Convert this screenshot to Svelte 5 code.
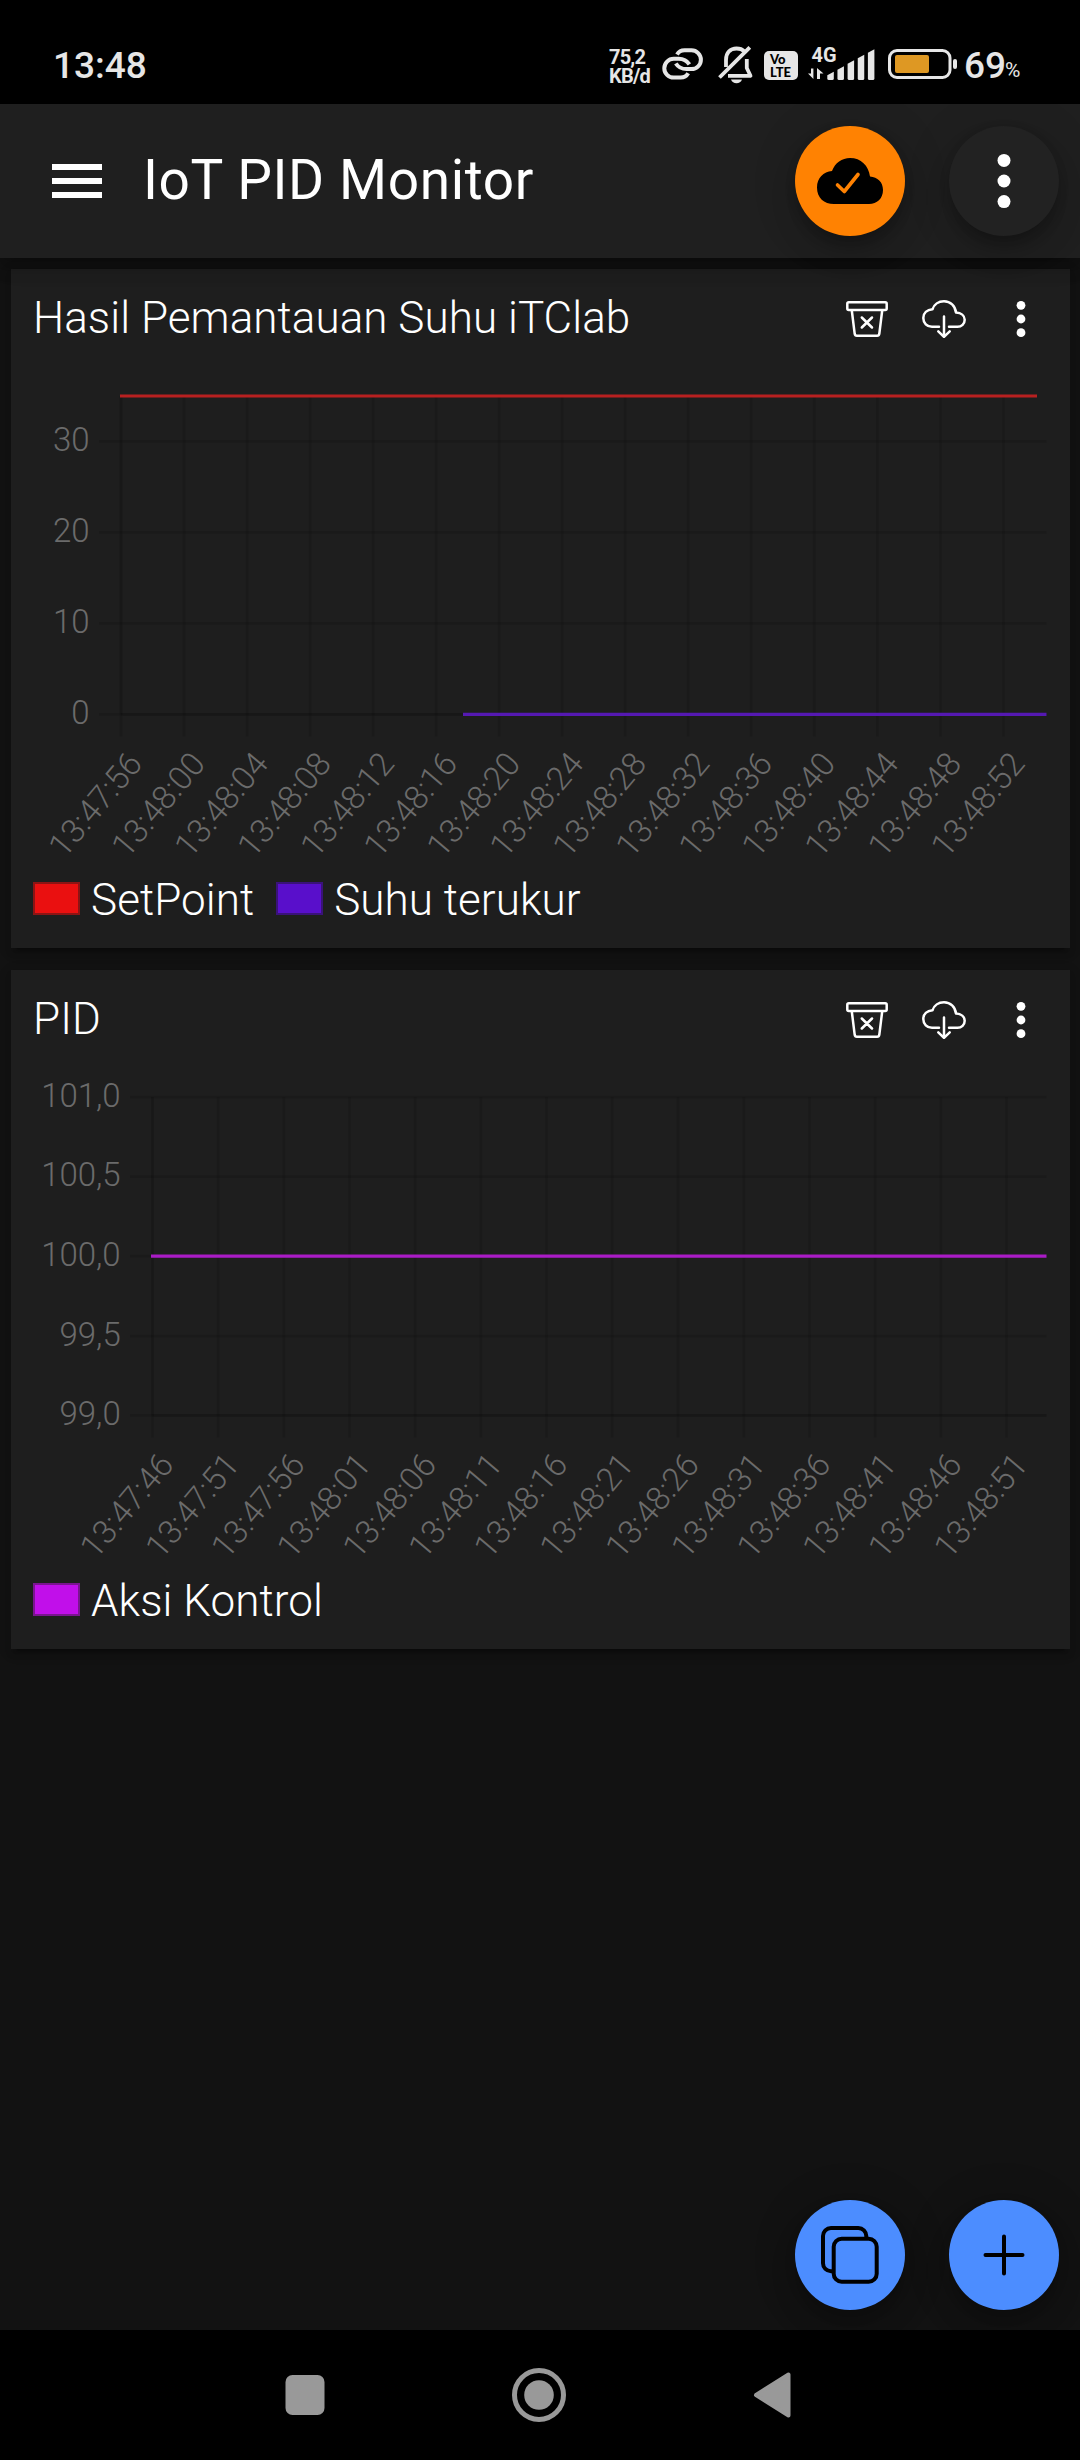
<script>
  const range = (n) => Array.from({ length: n }, (_, i) => i);

  const cards = [
    {
      title: 'Hasil Pemantauan Suhu iTClab',
      x0: 110, step: 63.03, left: 88, labelX: 78.5,
      y: [[172.3, '30'], [263.3, '20'], [354.3, '10'], [445.4, '0']],
      times: ['13:47:56', '13:48:00', '13:48:04', '13:48:08', '13:48:12', '13:48:16', '13:48:20', '13:48:24', '13:48:28', '13:48:32', '13:48:36', '13:48:40', '13:48:44', '13:48:48', '13:48:52'],
      series: [
        { name: 'SetPoint', cls: 'red', x1: 109, x2: 1026, y: 127 },
        { name: 'Suhu terukur', cls: 'violet', x1: 452, x2: 1035.5, y: 445.4 }
      ]
    },
    {
      title: 'PID',
      x0: 141.4, step: 65.7, left: 119, labelX: 109.7,
      y: [[127, '101,0'], [206.5, '100,5'], [286.2, '100,0'], [366, '99,5'], [445.4, '99,0']],
      times: ['13:47:46', '13:47:51', '13:47:56', '13:48:01', '13:48:06', '13:48:11', '13:48:16', '13:48:21', '13:48:26', '13:48:31', '13:48:36', '13:48:41', '13:48:46', '13:48:51'],
      series: [{ name: 'Aksi Kontrol', cls: 'magenta', x1: 140, x2: 1035.5, y: 286.2 }]
    }
  ];
  const bars = [72.3, 66.7, 60.7, 55.3, 49.7];
</script>

<div class="screen">
  <div class="status">
    <span class="time">13:48</span>
    <div class="rate"><span>75,2</span><span>KB/d</span></div>
    <svg class="link" width="42" height="32" viewBox="662 48 42 32">
      <g fill="none" stroke="#e6e6e6" stroke-width="4">
        <path d="M677 54.500Q679.500 50.300 684.500 50.300H691.500A9.400 9.400 0 0 1 691.500 69.100H686.500Q679.500 69.100 675.800 63.500" />
        <path d="M688.200 73.300Q685.700 77.600 680.700 77.600H673.700A9.400 9.400 0 0 1 673.700 58.800H678.700Q685.700 58.800 689.400 64.400" />
      </g>
    </svg>
    <svg class="bell" width="36" height="38" viewBox="718 46 36 38">
      <g fill="none" stroke="#e6e6e6" stroke-width="3.8">
        <path d="M726 67V60C726 52.500 730.500 48.500 736.500 48.500Q741.500 48.500 744.300 51.300" />
        <path d="M746.800 59V68L750.500 75.800H728" stroke-linejoin="round" />
        <path d="M719.500 77.500L749.800 47.300" />
      </g>
      <path d="M731 79.500H742Q740.500 83.300 736.500 83.300T731 79.500Z" fill="#e6e6e6" />
    </svg>
    <div class="volte"><span>Vo</span><span>LTE</span></div>
    <svg class="signal" width="67" height="42" viewBox="808 39 67 42">
      <text x="811.5" y="61.800" class="g4" textLength="25" lengthAdjust="spacingAndGlyphs">4G</text>
      <path d="M813.400 68.500V79L808 73.500H811V68.500ZM817 79V68L823.500 73.500H820V79Z" fill="#e6e6e6" />
      {#each bars as top, i}
        <path d="M{827.300 + i * 10.150} {top + 3}l6.500 -3.500V78.500q0 1.500 -1.500 1.500h-3.500q-1.500 0 -1.500 -1.500Z" fill="#e6e6e6" />
      {/each}
    </svg>
    <svg class="battery" width="70" height="30" viewBox="888 49 70 30">
      <rect x="889.5" y="50.500" width="60.500" height="27" rx="7.500" fill="none" stroke="#e6e6e6" stroke-width="3" />
      <rect x="895" y="55" width="34" height="18" rx="2" fill="#de9823" />
      <rect x="953" y="59" width="4" height="10" rx="2" fill="#e6e6e6" />
    </svg>
    <span class="level">69</span><span class="pct">%</span>
  </div>

  <header>
    <svg width="50" height="34" viewBox="0 0 50 34"><path d="M0 3H50M0 17H50M0 31H50" stroke="#fff" stroke-width="6" /></svg>
    <h1>IoT PID Monitor</h1>
    <button class="fab orange" aria-label="Connected">
      <svg width="66" height="46" viewBox="0 0 66 46">
        <path d="M17 46C7 46 0 40 0 29.500C0 20 6.500 13.800 15 13C18 5 25 0 33 0C44 0 51.500 7.500 53 18.500C60.500 19 66 24 66 32C66 40.500 60 46 52 46Z" fill="#000" />
        <path d="M20.500 27L27.300 33.500L41 16.500" fill="none" stroke="#ff8202" stroke-width="3.600" stroke-linecap="round" stroke-linejoin="round" />
      </svg>
    </button>
    <button class="fab dark" aria-label="Menu">
      <svg width="14" height="56" viewBox="0 0 14 56" fill="#fff"><circle cx="7" cy="7.400" r="6.500" /><circle cx="7" cy="28" r="6.500" /><circle cx="7" cy="48.600" r="6.500" /></svg>
    </button>
  </header>

  <main>
    {#each cards as card}
      <section class="card">
        <div class="head">
          <h2>{card.title}</h2>
          <div class="tools">
            <svg width="42" height="36" viewBox="0 0 42 36" fill="none" stroke="#fff" stroke-width="2.500" stroke-linecap="round" stroke-linejoin="round">
              <rect x="1.300" y="1.300" width="39.400" height="7.700" rx="1.500" />
              <path d="M5.800 9.500L8.700 32.800Q9 34.700 10.800 34.700H31.200Q33 34.700 33.300 32.800L36.200 9.500M15.800 16.500L26 26.500M26 16.500L15.800 26.500" />
            </svg>
            <svg width="44" height="38" viewBox="0 0 44 38" fill="none" stroke="#fff" stroke-width="2.500" stroke-linecap="round" stroke-linejoin="round">
              <path d="M17 26.800H10C5 26.800 1.300 23 1.300 18C1.300 13 5 9.800 10.500 9.300C12 4.500 16.500 1.300 22 1.300C28.500 1.300 33.200 6 34 12.500C39 12.800 42.700 15.500 42.700 19.800C42.700 24 39.500 26.800 35.500 26.800H27M22 16.500V36.500M16.300 31.300L22 36.800L27.700 31.300" />
            </svg>
            <svg width="10" height="38" viewBox="0 0 10 38" fill="#fff"><circle cx="5" cy="5.300" r="4.400" /><circle cx="5" cy="19" r="4.400" /><circle cx="5" cy="32.700" r="4.400" /></svg>
          </div>
        </div>
        <svg class="chart" width="1058" height="491" viewBox="0 110 1058 491">
          <g class="grid">
            {#each card.y as [y]}<path d="M{card.left} {y}H1035.500" />{/each}
            {#each range(card.times.length) as i}<path d="M{card.x0 + i * card.step} 127V467.500" />{/each}
            <path d="M{card.x0} 445.400H1035.500" />
            <path class="axis" d="M{card.x0} 127V445.400" />
          </g>
          {#each card.y as [y, label]}
            <text class="tick" x={card.labelX} y={y + 9.800} text-anchor="end">{label}</text>
          {/each}
          {#each card.times as t, i}
            <text class="tick" text-anchor="end" transform="translate({card.x0 - 1 + i * card.step} 475.500) rotate(-50)" y="31">{t}</text>
          {/each}
          {#each card.series as s}
            <path class="line {s.cls}" d="M{s.x1} {s.y}H{s.x2}" />
          {/each}
        </svg>
        <div class="legend">
          {#each card.series as s}
            <div class="entry"><i class={s.cls}></i><span>{s.name}</span></div>
          {/each}
        </div>
      </section>
    {/each}

    <div class="actions">
      <button class="fab blue" aria-label="Copy">
        <svg width="58" height="58" viewBox="0 0 58 58" fill="none" stroke="#000" stroke-width="4">
          <rect x="12.700" y="12.700" width="43" height="43" rx="8" />
          <path d="M45.300 12V10a8 8 0 0 0-8-8H10a8 8 0 0 0-8 8V37.300a8 8 0 0 0 8 8H12" />
        </svg>
      </button>
      <button class="fab blue" aria-label="Add">
        <svg width="42" height="42" viewBox="0 0 42 42"><path d="M2.500 21H39.500M21 2.500V39.500" stroke="#000" stroke-width="4" stroke-linecap="round" /></svg>
      </button>
    </div>
  </main>

  <nav>
    <svg width="40" height="40" viewBox="0 0 40 40"><rect x="0.500" width="39" height="40" rx="7" fill="#999" /></svg>
    <svg width="54" height="54" viewBox="0 0 54 54"><circle cx="27" cy="27" r="24.500" fill="none" stroke="#999" stroke-width="5" /><circle cx="27" cy="27" r="14.800" fill="#999" /></svg>
    <svg width="38" height="46" viewBox="0 0 38 46"><path d="M3 23L35.500 2.500V43.500Z" fill="#999" stroke="#999" stroke-width="4" stroke-linejoin="round" /></svg>
  </nav>
</div>

<style>
  :global(body) { background: #121212; }
  .screen {
    width: 1080px; height: 2460px; display: flex; flex-direction: column;
    background: #121212; color: #fff; font-family: Roboto, sans-serif; overflow: hidden;
  }
  svg { display: block; flex: none; }
  .status {
    height: 104px; flex: none; background: #000; color: #e6e6e6;
    display: flex; align-items: center; padding: 27px 0 0 53px; box-sizing: border-box;
    font-weight: 500; white-space: nowrap;
  }
  .time { width: 556px; font-size: 37px; line-height: 44px; }
  .rate {
    width: 53px; display: flex; flex-direction: column; font-size: 20px;
    line-height: 19px; font-weight: 700; margin-top: 2px; letter-spacing: -0.8px;
  }
  .link { margin-top: -3px; }
  .bell { margin-left: 14px; margin-top: -1px; }
  .volte {
    width: 34px; height: 29px; margin-left: 10px; margin-top: -1px; box-sizing: border-box; padding: 2px 0 0 6px;
    background: #e6e6e6; color: #000; border-radius: 5px; display: flex; flex-direction: column;
    font: 900 13px/13px Lato, sans-serif;
  }
  .signal { margin-left: 10px; margin-top: -11px; }
  .g4 { font-size: 20px; font-weight: 700; fill: #e6e6e6; }
  .battery { margin-left: 13px; margin-top: -3px; }
  .level { margin-left: 6px; width: 41px; font-size: 37px; line-height: 44px; }
  .pct { font-size: 21px; line-height: 22px; margin-top: 9px; font-weight: 400; }

  header {
    height: 154px; flex: none; box-sizing: border-box; background: #1f1f1f; display: flex;
    align-items: center; padding: 0 21px 0 52px; z-index: 2;
    box-shadow: 0 5px 11px -3px rgba(0, 0, 0, 0.2), 0 11px 14px rgba(0, 0, 0, 0.14), 0 3px 27px rgba(0, 0, 0, 0.12);
  }
  h1 {
    margin: -2px auto 0 41px; font-size: 55px; line-height: 64px; font-weight: 400;
    letter-spacing: 0.62px; white-space: nowrap;
  }
  .fab {
    width: 110px; height: 110px; padding: 0; border: 0; border-radius: 50%; flex: none;
    display: flex; align-items: center; justify-content: center;
    box-shadow: 0 8px 14px -3px rgba(0, 0, 0, 0.2), 0 16px 27px rgba(0, 0, 0, 0.14), 0 3px 50px rgba(0, 0, 0, 0.12);
  }
  .fab + .fab { margin-left: 44px; }
  .orange { background: #ff8202; }
  .dark { background: #222; }
  .blue { background: #4c8dff; }

  main { flex: 1; display: flex; flex-direction: column; padding: 11px 10px 20px 11px; gap: 22px; }
  .card {
    height: 679px; background: #1e1e1e; display: flex; flex-direction: column;
    box-shadow: 0 8px 3px -5px rgba(0, 0, 0, 0.2), 0 5px 6px rgba(0, 0, 0, 0.14), 0 3px 14px rgba(0, 0, 0, 0.12);
  }
  .head {
    height: 110px; flex: none; box-sizing: border-box; padding: 0 44px 10px 22px;
    display: flex; align-items: center; justify-content: space-between;
  }
  h2 { margin: -2px 0 0; font-size: 44px; line-height: 52px; font-weight: 300; letter-spacing: 0.06px; white-space: nowrap; }
  .tools { display: flex; align-items: center; gap: 34px; }
  .tools svg:last-child { margin-left: 16px; }
  .chart { overflow: visible; }
  .grid path { stroke: rgba(0, 0, 0, 0.1); stroke-width: 2.75; fill: none; }
  .grid .axis { stroke: rgba(0, 0, 0, 0.05); }
  .tick { font-size: 33px; font-weight: 300; fill: #6b6b6b; }
  .line { stroke-width: 3.2; fill: none; }
  .line.red { stroke: #b82020; }
  .line.violet { stroke: #5519b2; }
  .line.magenta { stroke: #aa1cc6; }
  .legend { height: 57px; display: flex; align-items: center; gap: 22px; padding-left: 22px; }
  .entry { display: flex; align-items: center; gap: 11px; font-size: 44px; line-height: 52px; font-weight: 300; white-space: nowrap; }
  .entry span { padding-top: 2px; letter-spacing: 0.06px; }
  .entry i { width: 47px; height: 33px; box-sizing: border-box; border: 2px solid; }
  i.red { background: #ea1010; border-color: #8d1414; }
  i.violet { background: #590fcb; border-color: #3a127a; }
  i.magenta { background: #c10fea; border-color: #7a1590; }

  .actions { margin-top: auto; display: flex; justify-content: flex-end; padding-right: 11px; }
  nav { height: 130px; flex: none; background: #000; display: flex; align-items: center; padding-left: 285px; gap: 187px; }
</style>
